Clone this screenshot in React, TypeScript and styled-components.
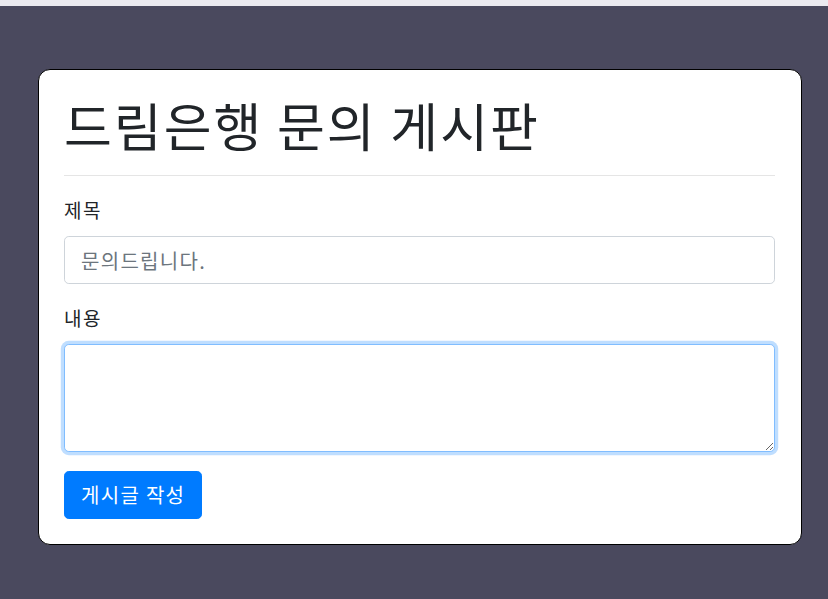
import * as React from 'react';
import styled, { createGlobalStyle } from 'styled-components';

const GlobalStyle = createGlobalStyle`
  body {
    margin: 0;
    background: #4a495e;
    font-family: "Noto Sans CJK KR", "Noto Sans", sans-serif;
    color: #212529;
  }
`;

const TopStrip = styled.div`
  height: 6px;
  background: #ebeaf0;
`;

const Page = styled.div`
  padding: 63px 26px 54px 38px;
`;

const Card = styled.div`
  background: #fff;
  border: 1px solid #000;
  border-radius: 12px;
  padding: 24px 26px 25px 25px;
`;

const Title = styled.h1`
  margin: 0;
  font-size: 52px;
  font-weight: 400;
  letter-spacing: 2px;
  line-height: 1.2;
  color: #212529;
`;

const Divider = styled.hr`
  margin: 19px 0 0;
  border: 0;
  border-top: 1px solid rgba(0, 0, 0, 0.1);
`;

const Form = styled.form`
  display: flex;
  flex-direction: column;
`;

const FormGroup = styled.div`
  margin-top: 20px;
`;

const Label = styled.label`
  display: block;
  font-size: 19px;
  letter-spacing: 1.5px;
  line-height: 27px;
  margin-bottom: 13px;
  color: #212529;
`;

const fieldCss = `
  display: block;
  width: 100%;
  box-sizing: border-box;
  padding: 8px 16px;
  font-family: "Noto Sans CJK KR", "Noto Sans", sans-serif;
  font-size: 20px;
  letter-spacing: 1.3px;
  line-height: 30px;
  color: #495057;
  background: #fff;
  border: 1px solid #ced4da;
  border-radius: 4.8px;
  outline: none;
  &::placeholder {
    color: #6c757d;
  }
`;

const TextInput = styled.input`
  ${fieldCss}
  height: 48px;
`;

const TextArea = styled.textarea<{ $focused?: boolean }>`
  ${fieldCss}
  height: 108px;
  resize: vertical;
  ${(p) =>
    p.$focused &&
    `
    border-color: #80bdff;
    box-shadow: 0 0 0 3.2px rgba(0, 123, 255, 0.25);
  `}
`;

const SubmitButton = styled.button`
  align-self: flex-start;
  margin-top: 19px;
  padding: 8px 16px;
  font-family: "Noto Sans CJK KR", "Noto Sans", sans-serif;
  font-size: 20px;
  letter-spacing: 1.3px;
  line-height: 30px;
  color: #fff;
  background: #007bff;
  border: 1px solid #007bff;
  border-radius: 4.8px;
  cursor: pointer;
`;

export default function App() {
  return (
    <>
      <GlobalStyle />
      <TopStrip />
      <Page>
        <Card>
          <Title>드림은행 문의 게시판</Title>
          <Divider />
          <Form onSubmit={(e) => e.preventDefault()}>
            <FormGroup>
              <Label htmlFor="title">제목</Label>
              <TextInput id="title" type="text" placeholder="문의드립니다." />
            </FormGroup>
            <FormGroup>
              <Label htmlFor="content">내용</Label>
              <TextArea id="content" rows={3} $focused autoFocus />
            </FormGroup>
            <SubmitButton type="submit">게시글 작성</SubmitButton>
          </Form>
        </Card>
      </Page>
    </>
  );
}
